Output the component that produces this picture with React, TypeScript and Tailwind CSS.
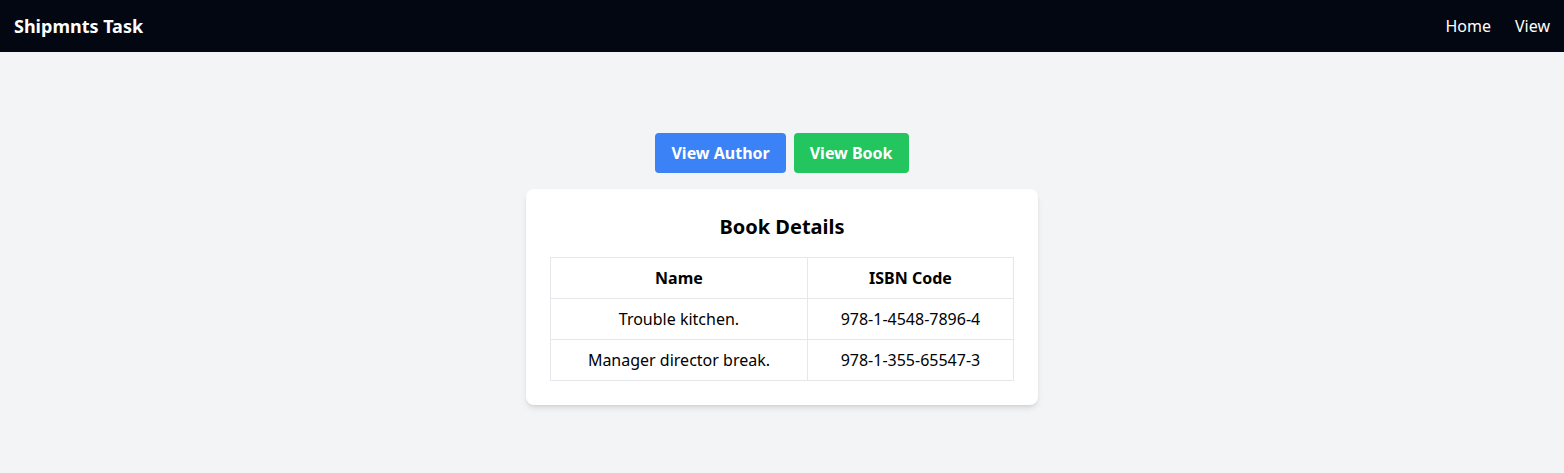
const books = [
  { name: 'Trouble kitchen.', isbn: '978-1-4548-7896-4' },
  { name: 'Manager director break.', isbn: '978-1-355-65547-3' },
];

export default function App() {
  return (
    <div className="min-h-screen bg-[#f3f4f6] text-black font-['Noto_Sans',sans-serif]">
      <nav className="flex h-[52px] items-center justify-between bg-[#030712] px-[14px] text-white">
        <span className="text-lg font-bold">Shipmnts Task</span>
        <div className="flex gap-6">
          <a href="#" className="text-base">Home</a>
          <a href="#" className="text-base">View</a>
        </div>
      </nav>

      <main className="flex flex-col items-center pt-[81px]">
        <div className="mb-4 flex gap-2">
          <button className="rounded bg-[#3b82f6] px-4 py-2 font-bold text-white">
            View Author
          </button>
          <button className="rounded bg-[#22c55e] px-4 py-2 font-bold text-white">
            View Book
          </button>
        </div>

        <div className="w-full max-w-lg rounded-lg bg-white p-6 shadow-md">
          <h2 className="mb-4 text-center text-xl font-bold">Book Details</h2>
          <table className="w-full border-collapse border border-[#e5e7eb]">
            <thead>
              <tr>
                <th className="border border-[#e5e7eb] px-4 py-2">Name</th>
                <th className="border border-[#e5e7eb] px-4 py-2">ISBN Code</th>
              </tr>
            </thead>
            <tbody>
              {books.map((b) => (
                <tr key={b.isbn}>
                  <td className="border border-[#e5e7eb] px-4 py-2 text-center">{b.name}</td>
                  <td className="border border-[#e5e7eb] px-4 py-2 text-center">{b.isbn}</td>
                </tr>
              ))}
            </tbody>
          </table>
        </div>
      </main>
    </div>
  );
}
